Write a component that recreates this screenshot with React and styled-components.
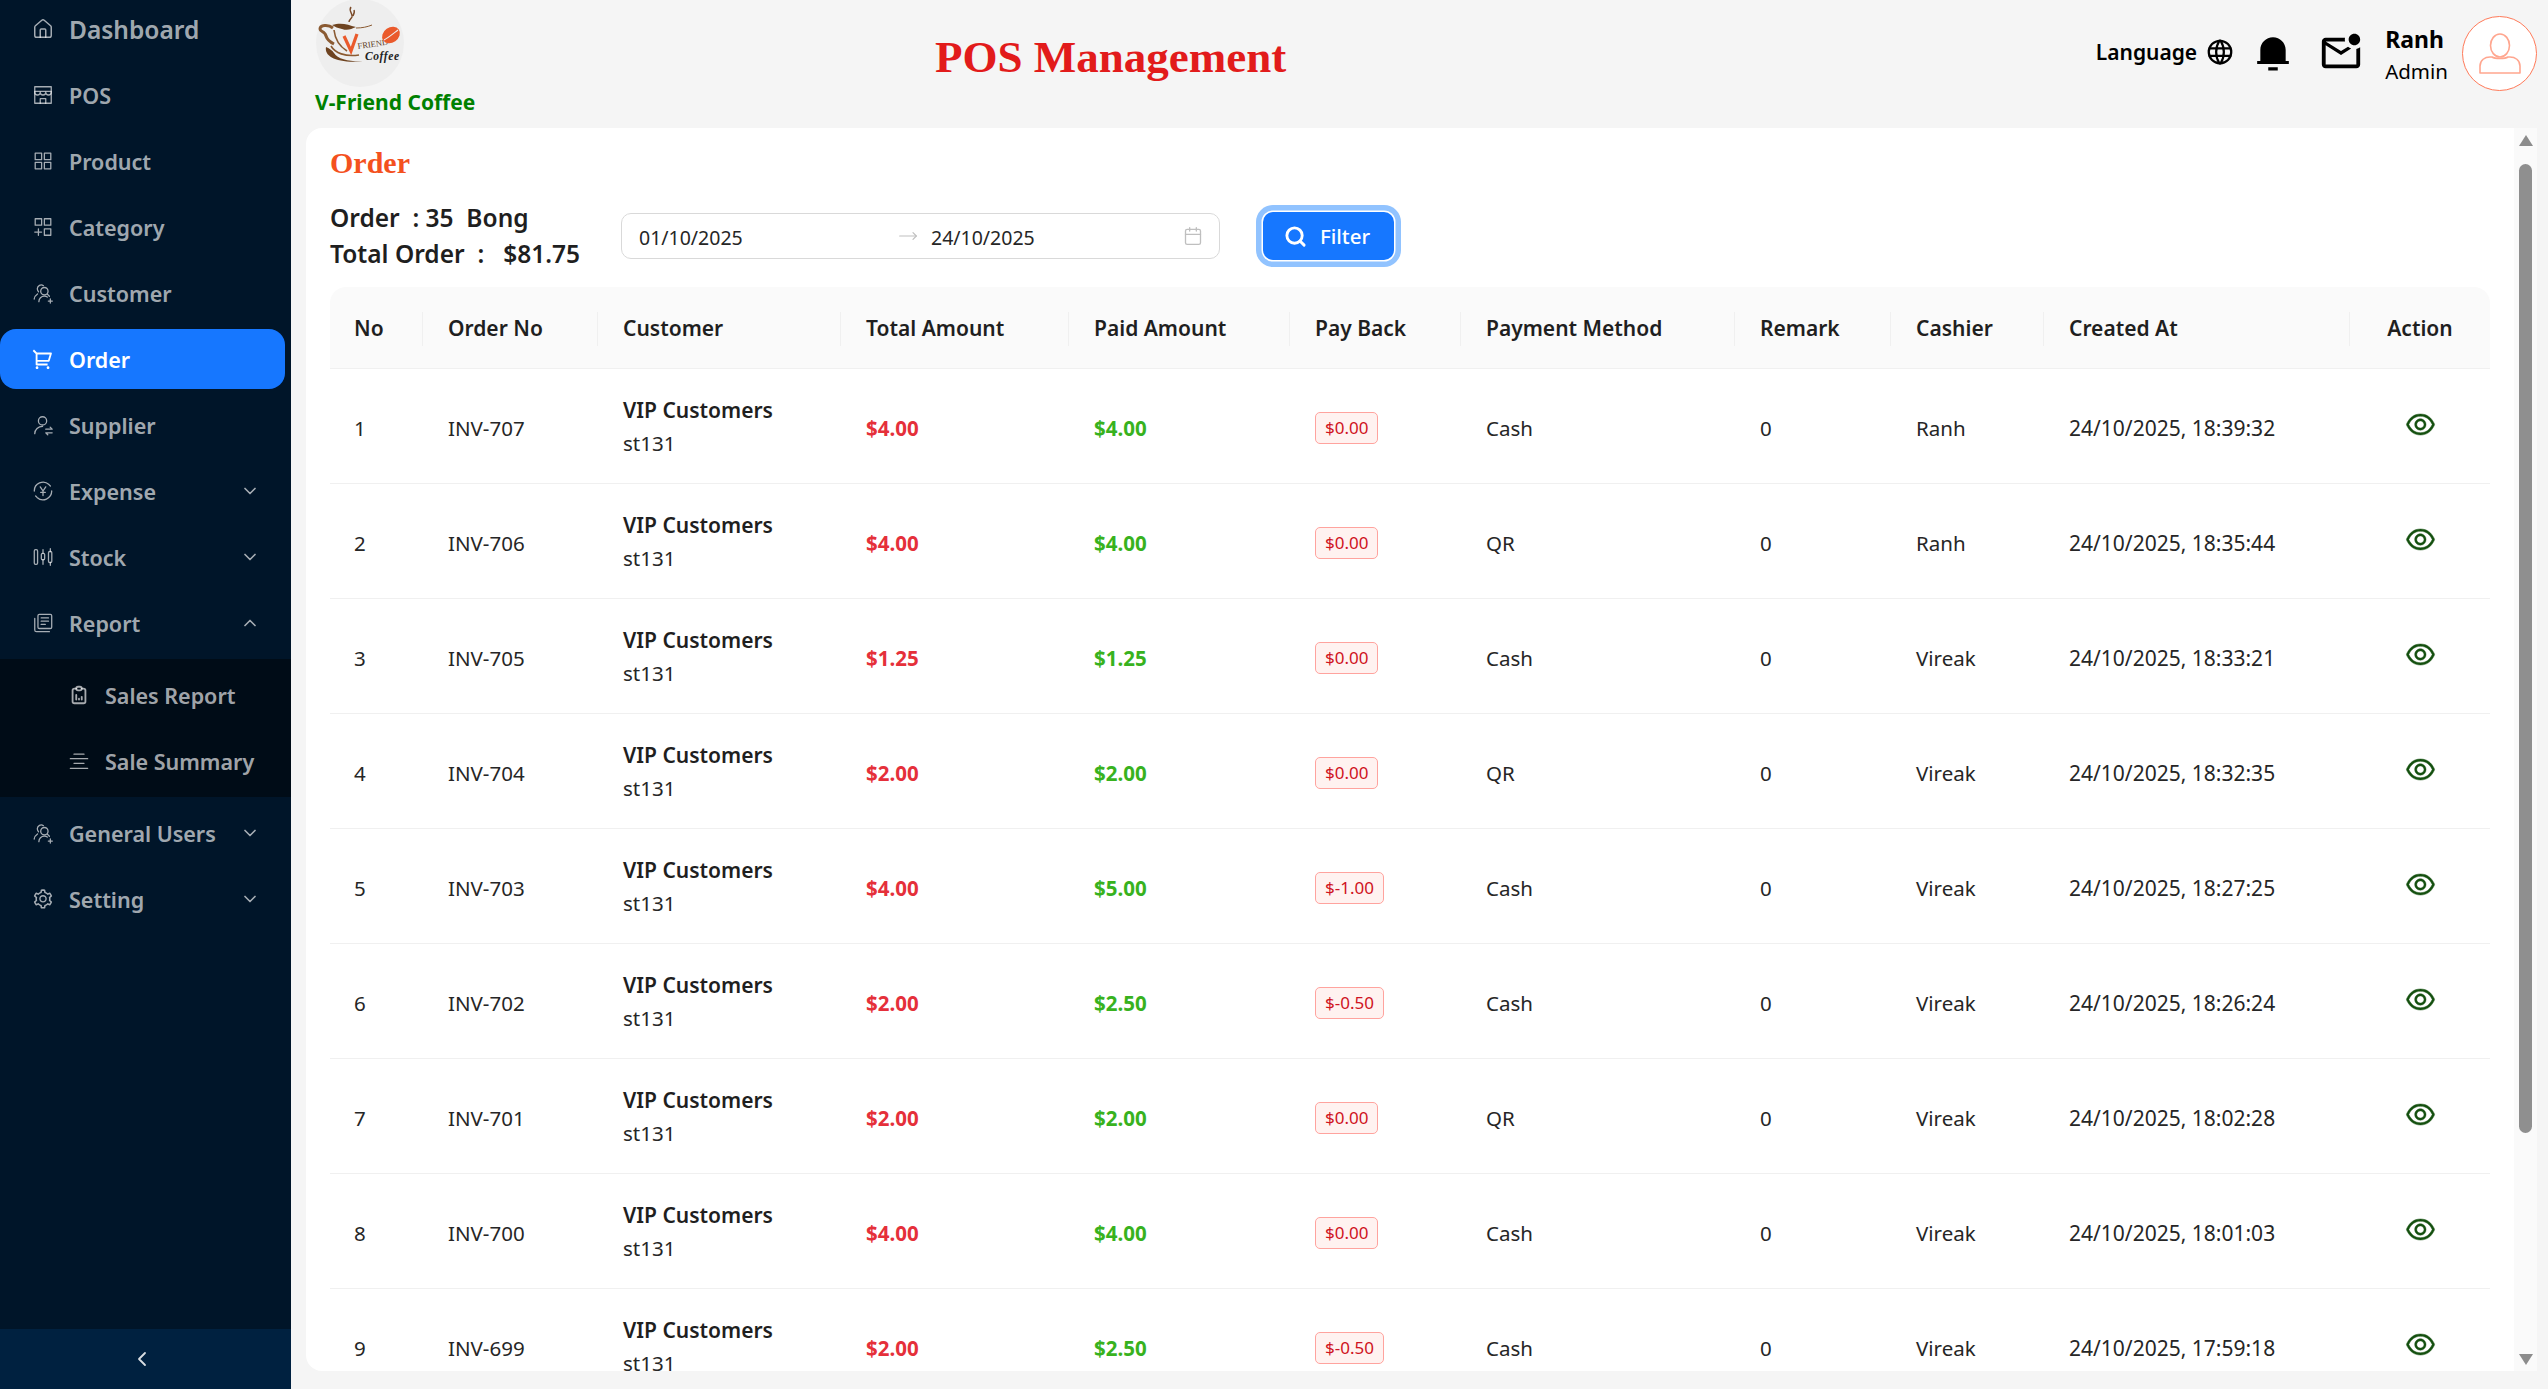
import React from "react";
import styled, { createGlobalStyle } from "styled-components";
import { House, ChevronDown, ChevronUp, ChevronLeft, Search, Calendar, MoveRight } from "lucide-react";
import { AiOutlineSetting, AiOutlineEye } from "react-icons/ai";
import { RiShoppingCart2Line, RiNotification3Fill } from "react-icons/ri";
import { TbReportAnalytics, TbWorld } from "react-icons/tb";
import { MdOutlineMarkEmailUnread } from "react-icons/md";

const Global = createGlobalStyle`
  html, body { margin: 0; padding: 0; height: 100%; overflow: hidden; }
  body { font-family: "Noto Sans", "Open Sans", sans-serif; background: #f5f5f5; }
  * { box-sizing: border-box; }
`;

const Shell = styled.div`display: flex; width: 2548px; height: 1389px; overflow: hidden;`;
const Sidebar = styled.aside`width: 291px; flex: none; height: 100%; background: #001529; display: flex; flex-direction: column;`;
const Menu = styled.nav`flex: 1; display: flex; flex-direction: column; gap: 6px; margin-top: -1px; padding-right: 6px; overflow: hidden;`;
const Item = styled.div`
  height: 60px; flex: none; display: flex; align-items: center; gap: 15px;
  padding-left: ${p => (p.$sub ? 68 : 32)}px; padding-right: 25px;
  border-radius: 16px;
  font-size: ${p => (p.$big ? 24.5 : 21.5)}px; font-weight: 600;
  color: ${p => (p.$active ? "#fff" : "rgba(255,255,255,.65)")};
  background: ${p => (p.$active ? "#1677ff" : "transparent")};
  svg.lead { width: 22px; height: 22px; flex: none; }
`;
const ItemLabel = styled.span`flex: 1; white-space: nowrap;`;
const SubList = styled.div`display: flex; flex-direction: column; gap: 6px; padding: 6px 0; margin-right: -6px; background: #000c17; flex: none;`;
const Trigger = styled.div`height: 60px; flex: none; background: #002140; color: rgba(255,255,255,.85); display: flex; align-items: center; justify-content: center; padding-right: 8px;`;

const Main = styled.div`flex: 1; min-width: 0; display: flex; flex-direction: column;`;
const Header = styled.header`height: 128px; flex: none; display: flex; padding: 0 11px 0 24px; background: #f5f5f5;`;
const Brand = styled.div`width: 160px; flex: none; display: flex; flex-direction: column;`;
const BrandName = styled.div`font-size: 21px; font-weight: 700; line-height: 28px; color: #008000; white-space: nowrap; margin-top: 1px;`;
const PageTitle = styled.h1`
  margin: 32px 0 0 460px; font-family: "Liberation Serif", serif; font-size: 45px; line-height: 50px;
  font-weight: 700; color: #e21b1b; white-space: nowrap;
`;
const HeaderRight = styled.div`margin-left: auto; display: flex; align-items: flex-start; padding-top: 16px;`;
const Lang = styled.div`display: flex; align-items: center; gap: 8px; font-size: 21px; font-weight: 600; color: #000; height: 74px; padding-bottom: 2px;`;
const HeaderIcon = styled.div`display: flex; align-items: center; justify-content: center; height: 74px; color: #000; margin-left: ${p => p.$ml}px;`;
const UserBlock = styled.div`margin-left: 21px; color: #000; display: flex; flex-direction: column; padding-top: 7px;`;
const UserName = styled.div`font-size: 23px; font-weight: 700; line-height: 32px;`;
const UserRole = styled.div`font-size: 20.5px; line-height: 32px;`;
const Avatar = styled.div`
  width: 75px; height: 75px; margin-left: 14px; border-radius: 50%; background: #fff; border: 1.5px solid #ff7a59;
  display: flex; align-items: center; justify-content: center;
`;

const Card = styled.section`flex: 1; min-height: 0; margin: 0 11px 18px 15px; background: #fff; border-radius: 16px 0 0 16px; display: flex; overflow: hidden;`;
const Scroll = styled.div`flex: 1; min-width: 0; overflow: hidden; padding: 16px 24px 0;`;
const Title = styled.h2`margin: 0; font-family: "Liberation Serif", serif; font-size: 30px; line-height: 38px; font-weight: 700; color: #f4511e;`;
const Filters = styled.div`display: flex; align-items: center; gap: 43px; height: 62px; margin-top: 23px;`;
const Stats = styled.div`font-size: 24.5px; font-weight: 600; line-height: 36px; color: #1f1f1f; white-space: pre; width: 248px; flex: none;`;
const DateRange = styled.div`
  width: 599px; height: 46px; flex: none; border: 1.5px solid #d9d9d9; border-radius: 10px; display: flex; align-items: center;
  padding: 0 16px 0 17px; font-size: 19.5px; color: #262626; background: #fff;
`;
const DateValue = styled.span`width: 259px; white-space: nowrap; padding-top: 2px;`;
const DateArrow = styled.span`width: 33px; color: #bfbfbf; display: flex; align-items: center;`;
const DateEnd = styled.span`flex: 1; white-space: nowrap; padding-top: 2px;`;
const FilterButton = styled.button`
  width: 131px; height: 48px; flex: none; display: flex; align-items: center; justify-content: center; gap: 13px;
  border: 0; border-radius: 10px; background: #1677ff; color: #fff; font: 500 20.5px "Noto Sans", sans-serif;
  box-shadow: 0 0 0 1.5px #fff, 0 0 0 7px #91c3ff; padding: 0 3px 0 0;
`;

const Table = styled.table`width: 2160px; margin-top: 20px; border-collapse: separate; border-spacing: 0; table-layout: fixed;`;
const Th = styled.th`
  position: relative; height: 82px; padding: 0 20px 0 25px; background: #fafafa; border-bottom: 1px solid #f0f0f0;
  font-size: 21px; font-weight: 600; color: #1f1f1f; text-align: ${p => p.$center ? "center" : "left"}; white-space: nowrap;
  &:first-child { border-top-left-radius: 16px; padding-left: 24px; }
  &:last-child { border-top-right-radius: 16px; padding: 0; }
  &:not(:last-child)::after { content: ""; position: absolute; right: 0; top: 25px; height: 34px; width: 1.5px; background: #f0f0f0; }
`;
const Td = styled.td`
  height: 115px; padding: 3px 20px 0 25px; border-bottom: 1px solid #f0f0f0; font-size: ${p => p.$wide ? 21 : 20.5}px; color: #262626; white-space: nowrap;
  text-align: ${p => p.$center ? "center" : "left"};
  &:first-child { padding-left: 24px; }
  &:last-child { padding-left: 0; padding-right: 0; }
`;
const CustName = styled.div`font-weight: 600; font-size: 21px; color: #1f1f1f; line-height: 33px; margin-top: -2px;`;
const CustCode = styled.div`line-height: 33px;`;
const Money = styled.span`font-weight: 700; color: ${p => p.$paid ? "#38b21e" : "#e5303a"};`;
const Tag = styled.span`
  display: inline-flex; align-items: center; height: 32px; padding: 0 9px; border: 1px solid #ffa39e; border-radius: 5px; background: #fff2f0;
  color: #cf1322; font-size: 17px;
`;
const EyeWrap = styled.div`display: flex; justify-content: center; color: #14500f; margin-top: -6px; svg { stroke-width: 14px; stroke: currentColor; }`;

const Track = styled.div`width: 23px; flex: none; background: #fafafa; display: flex; flex-direction: column; align-items: center; height: 100%;`;
const Arrow = styled.div`
  width: 0; height: 0; border-left: 7.5px solid transparent; border-right: 7.5px solid transparent; flex: none;
  ${p => p.$down ? "border-top: 11px solid #8c8c8c; margin-top: auto; margin-bottom: 6px;" : "border-bottom: 11px solid #8c8c8c; margin-top: 7px;"}
`;
const Thumb = styled.div`width: 13px; height: 969px; margin-top: 18px; border-radius: 7px; background: #8f8f8f; flex: none;`;

const Line = ({ className, children, w = 1.4 }) => (
  <svg className={className} viewBox="0 0 24 24" fill="none" stroke="currentColor" strokeWidth={w} strokeLinecap="round" strokeLinejoin="round">{children}</svg>
);
const HomeIcon = props => <House strokeWidth={1.6} {...props} />;
const StoreIcon = ({ className }) => (
  <Line className={className}>
    <path d="M3 3h18v18H3z" />
    <path d="M3 8h18" />
    <path d="M3 9c0 4 6 4 6 0 0 4 6 4 6 0 0 4 6 4 6 0" />
    <path d="M9 21v-5h6v5" />
  </Line>
);
const ProductIcon = ({ className }) => (
  <Line className={className}>
    <rect x="3.5" y="3.5" width="7" height="7" />
    <rect x="13.5" y="3.5" width="7" height="7" />
    <rect x="3.5" y="13.5" width="7" height="7" />
    <rect x="13.5" y="13.5" width="7" height="7" />
  </Line>
);
const CategoryIcon = ({ className }) => (
  <Line className={className}>
    <rect x="3.5" y="3" width="7" height="7" />
    <rect x="13.5" y="3" width="7" height="7" />
    <rect x="13.5" y="14" width="7" height="7" />
    <path d="M7 14v7M3 17.5h7.5" />
  </Line>
);
const ExpenseIcon = ({ className }) => (
  <Line className={className}>
    <path d="M2.5 12a9.5 9.5 0 0 1 16-7l1.5 1.5" />
    <path d="M21.5 12a9.5 9.5 0 0 1-16 7L4 17.5" />
    <path d="M9 7.5l3 4.5 3-4.5M12 12v5M9.5 13.5h5" />
  </Line>
);
const StockIcon = ({ className }) => (
  <Line className={className}>
    <rect x="2.5" y="4" width="3.6" height="16" rx="1.4" />
    <path d="M12 4v4M12 15v5" />
    <rect x="10.2" y="8" width="3.6" height="7" rx="1.4" />
    <path d="M20 3v3M20 18v3" />
    <rect x="18" y="6" width="3.6" height="12" rx="1.4" />
  </Line>
);
const ReportIcon = ({ className }) => (
  <Line className={className}>
    <rect x="6.5" y="2.5" width="15" height="15.5" rx="1.5" />
    <path d="M3 7v12.5A2 2 0 0 0 5 21.5h14" />
    <path d="M10 6.5h8M10 10h8M10 13.5h4.5" />
  </Line>
);
const SummaryIcon = ({ className }) => (
  <Line className={className} w={1.3}>
    <path d="M6.5 4.5h11M2.5 9.5h19M6.5 14.5h11M2.5 20h19" />
  </Line>
);
const CustomerIcon = ({ className }) => (
  <Line className={className}>
    <circle cx="13.5" cy="10" r="4" />
    <path d="M7.5 21.5c0-3.4 2.6-6 6-6 1.2 0 2.3.3 3.2.9M17 13.5l2 2" />
    <path d="M12.5 4A4.2 4.2 0 0 0 5.8 7.4c0 1.3.5 2.4 1.3 3.2M6 13c-2 1.3-3.4 3.3-3.6 5.6" />
    <path d="M20 18.5v4.5M17.8 20.8h4.4" />
  </Line>
);
const SupplierIcon = ({ className }) => (
  <Line className={className}>
    <circle cx="11.5" cy="7.5" r="4.5" />
    <path d="M3 21.5c0-4.6 3.8-8 8.5-8" />
    <path d="M15 16.5h7l-2.2-2.2M22 20.5h-7l2.2 2.2" />
  </Line>
);
const AvatarIcon = () => (
  <svg width="44" height="44" viewBox="0 0 44 44" fill="none" stroke="#ffa68f" strokeWidth="1.6" strokeLinejoin="round">
    <ellipse cx="22" cy="13.5" rx="9.5" ry="11.5" />
    <path d="M2 41v-7c0-6 5-9 10-9h2c3 2 13 2 16 0h2c5 0 10 3 10 9v7z" />
  </svg>
);
const Logo = () => (
  <svg width="90" height="87" viewBox="0 0 90 87">
    <circle cx="45" cy="43" r="44" fill="#eeeeee" />
    <path d="M36 7c-3 4 2 6 1 10-1 2-3 3-3 5M39 10c1 2 0 4-1 6" fill="none" stroke="#7a4a28" strokeWidth="1.4" />
    <path d="M18 28c-5-4-13-3-13 1 0 3 5 2 6 7 1 3 4 6 8 8" fill="none" stroke="#8a5a32" strokeWidth="3" />
    <path d="M17 25c10-3 16 0 24 2-5 2-8 4-14 2-4-1-7-2-10-4z" fill="#6e4320" />
    <path d="M41 28c6 0 11-1 16-3" fill="none" stroke="#8a5a32" strokeWidth="1" />
    <path d="M19 30c1 9 5 16 13 21" fill="none" stroke="#8a5a32" strokeWidth="1.6" />
    <path d="M11 47c-2 10 12 17 40 14-14 1-28-1-32-8-2-3-4-4-8-6z" fill="#6e4320" />
    <path d="M16 46c4 7 14 11 28 9" fill="none" stroke="#8a5a32" strokeWidth="1.6" />
    <path d="M29 36l7 15 6-17" fill="none" stroke="#ea5a2c" strokeWidth="3.2" />
    <text x="43" y="49" transform="rotate(-8 43 49)" fontFamily="Liberation Serif, serif" fontSize="8.5" fill="#5c3a1e">FRIEND</text>
    <text x="50" y="60" fontFamily="Liberation Serif, serif" fontStyle="italic" fontWeight="700" fontSize="11.5" letterSpacing=".6" fill="#222">Coffee</text>
    <ellipse cx="76" cy="35" rx="9.5" ry="7.5" transform="rotate(-35 76 35)" fill="#ea5a2c" />
    <path d="M69 40c4-2 10-7 14-10" stroke="#eeeeee" strokeWidth="1.1" fill="none" />
  </svg>
);

const rows = [
  [1, "INV-707", "4.00", "4.00", "0.00", "Cash", "Ranh", "18:39:32"],
  [2, "INV-706", "4.00", "4.00", "0.00", "QR", "Ranh", "18:35:44"],
  [3, "INV-705", "1.25", "1.25", "0.00", "Cash", "Vireak", "18:33:21"],
  [4, "INV-704", "2.00", "2.00", "0.00", "QR", "Vireak", "18:32:35"],
  [5, "INV-703", "4.00", "5.00", "-1.00", "Cash", "Vireak", "18:27:25"],
  [6, "INV-702", "2.00", "2.50", "-0.50", "Cash", "Vireak", "18:26:24"],
  [7, "INV-701", "2.00", "2.00", "0.00", "QR", "Vireak", "18:02:28"],
  [8, "INV-700", "4.00", "4.00", "0.00", "Cash", "Vireak", "18:01:03"],
  [9, "INV-699", "2.00", "2.50", "-0.50", "Cash", "Vireak", "17:59:18"],
];
const cols = [93, 175, 243, 228, 221, 171, 274, 156, 153, 306, 140];
const heads = ["No", "Order No", "Customer", "Total Amount", "Paid Amount", "Pay Back", "Payment Method", "Remark", "Cashier", "Created At", "Action"];

const NavItem = ({ icon: I, label, chevron, ...rest }) => (
  <Item {...rest}>
    <I className="lead" />
    <ItemLabel>{label}</ItemLabel>
    {chevron === "down" && <ChevronDown size={20} strokeWidth={2} />}
    {chevron === "up" && <ChevronUp size={20} strokeWidth={2} />}
  </Item>
);

export default function App() {
  return (
    <Shell>
      <Global />
      <Sidebar>
        <Menu>
          <NavItem icon={HomeIcon} label="Dashboard" $big />
          <NavItem icon={StoreIcon} label="POS" />
          <NavItem icon={ProductIcon} label="Product" />
          <NavItem icon={CategoryIcon} label="Category" />
          <NavItem icon={CustomerIcon} label="Customer" />
          <NavItem icon={RiShoppingCart2Line} label="Order" $active />
          <NavItem icon={SupplierIcon} label="Supplier" />
          <NavItem icon={ExpenseIcon} label="Expense" chevron="down" />
          <NavItem icon={StockIcon} label="Stock" chevron="down" />
          <NavItem icon={ReportIcon} label="Report" chevron="up" />
          <SubList>
            <NavItem icon={TbReportAnalytics} label="Sales Report" $sub />
            <NavItem icon={SummaryIcon} label="Sale Summary" $sub />
          </SubList>
          <NavItem icon={CustomerIcon} label="General Users" chevron="down" />
          <NavItem icon={AiOutlineSetting} label="Setting" chevron="down" />
        </Menu>
        <Trigger><ChevronLeft size={24} strokeWidth={1.8} /></Trigger>
      </Sidebar>
      <Main>
        <Header>
          <Brand>
            <Logo />
            <BrandName>V-Friend Coffee</BrandName>
          </Brand>
          <PageTitle>POS Management</PageTitle>
          <HeaderRight>
            <Lang>Language <TbWorld size={30} strokeWidth={1.8} /></Lang>
            <HeaderIcon $ml={19}><RiNotification3Fill size={38} /></HeaderIcon>
            <HeaderIcon $ml={26}><MdOutlineMarkEmailUnread size={46} /></HeaderIcon>
            <UserBlock>
              <UserName>Ranh</UserName>
              <UserRole>Admin</UserRole>
            </UserBlock>
            <Avatar><AvatarIcon /></Avatar>
          </HeaderRight>
        </Header>
        <Card>
          <Scroll>
            <Title>Order</Title>
            <Filters>
              <Stats>{"Order  : 35  Bong\nTotal Order  :   $81.75"}</Stats>
              <DateRange>
                <DateValue>01/10/2025</DateValue>
                <DateArrow><MoveRight size={20} strokeWidth={1.4} /></DateArrow>
                <DateEnd>24/10/2025</DateEnd>
                <Calendar size={20} color="#bfbfbf" strokeWidth={1.6} />
              </DateRange>
              <FilterButton><Search size={23} strokeWidth={3} />Filter</FilterButton>
            </Filters>
            <Table>
              <colgroup>{cols.map((w, i) => <col key={i} width={w} />)}</colgroup>
              <thead>
                <tr>{heads.map((h, i) => <Th key={h} $center={i === 10}>{h}</Th>)}</tr>
              </thead>
              <tbody>
                {rows.map(r => (
                  <tr key={r[0]}>
                    <Td>{r[0]}</Td>
                    <Td>{r[1]}</Td>
                    <Td><CustName>VIP Customers</CustName><CustCode>st131</CustCode></Td>
                    <Td><Money>${r[2]}</Money></Td>
                    <Td><Money $paid>${r[3]}</Money></Td>
                    <Td><Tag>${r[4]}</Tag></Td>
                    <Td>{r[5]}</Td>
                    <Td>0</Td>
                    <Td>{r[6]}</Td>
                    <Td $wide>24/10/2025, {r[7]}</Td>
                    <Td $center><EyeWrap><AiOutlineEye size={33} /></EyeWrap></Td>
                  </tr>
                ))}
              </tbody>
            </Table>
          </Scroll>
          <Track>
            <Arrow />
            <Thumb />
            <Arrow $down />
          </Track>
        </Card>
      </Main>
    </Shell>
  );
}
